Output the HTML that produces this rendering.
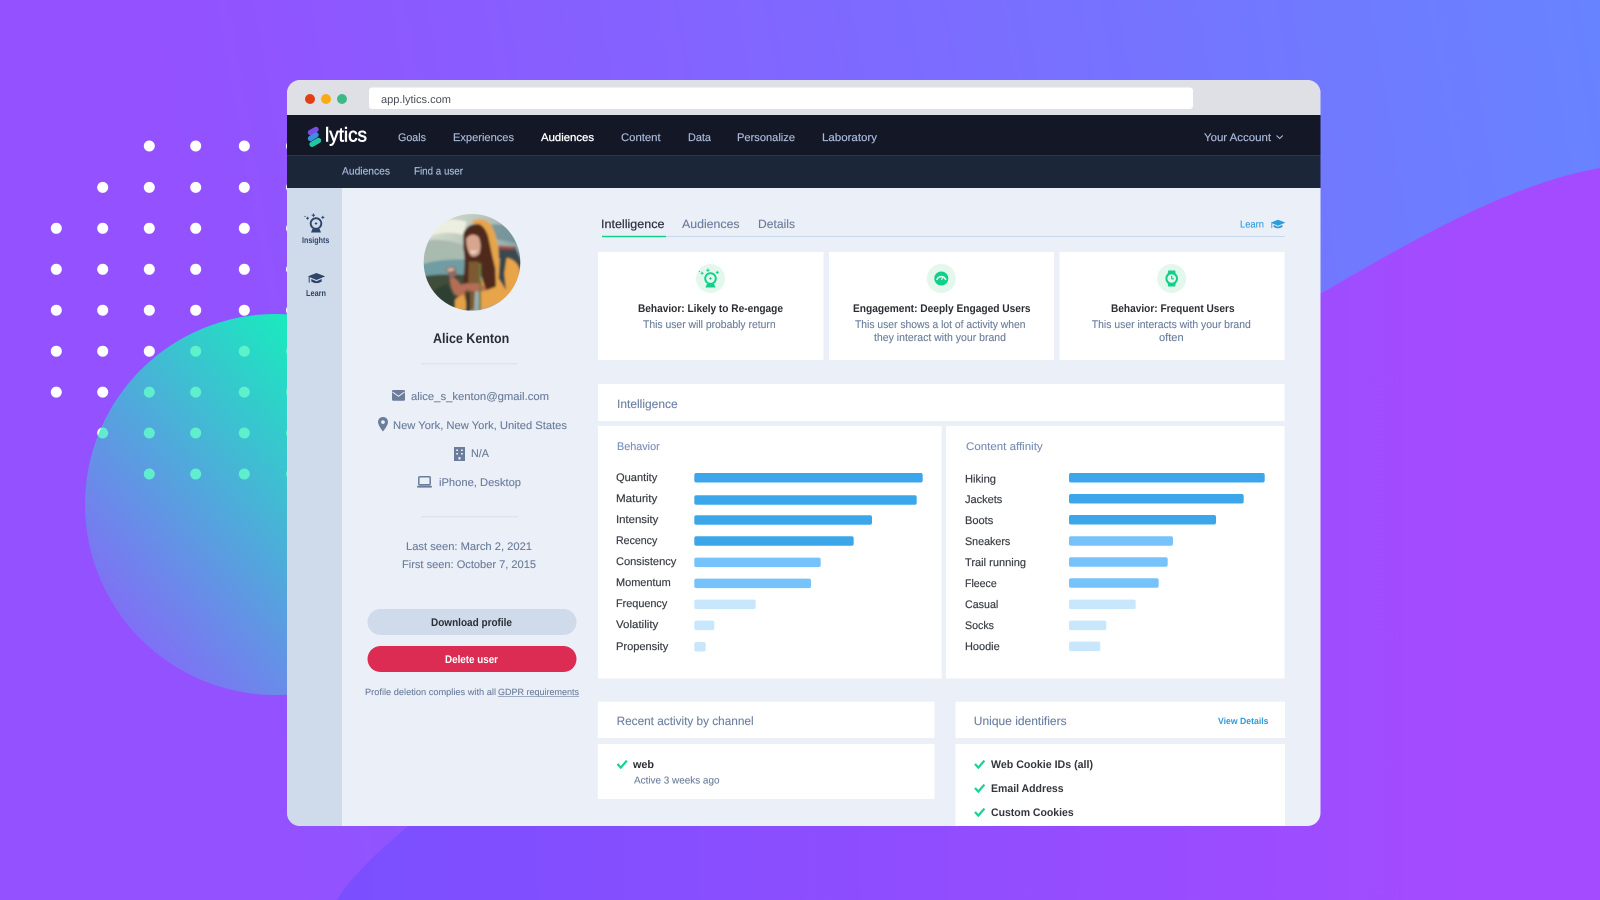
<!DOCTYPE html>
<html lang="en"><head><meta charset="utf-8"><title>Lytics</title>
<style>
html,body{margin:0;padding:0;width:1600px;height:900px;overflow:hidden;background:#9351ff}
svg{display:block;position:absolute;left:0;top:0}
text{font-family:"Liberation Sans",sans-serif;text-rendering:geometricPrecision}
.n{font-size:11px;fill:#a9b9d8;stroke:#a9b9d8;stroke-width:.18}
.d{font-size:11px;fill:#6b7d9b;stroke:#6b7d9b;stroke-width:.12}
.l{font-size:11px;fill:#3a3e46;stroke:#3a3e46;stroke-width:.2}
.b{font-size:11px;fill:#2a2d33;font-weight:700}
.h{font-size:12px;fill:#6d80a2;stroke:#6d80a2;stroke-width:.12}
.c{fill:#10cf8a}
</style></head><body>
<svg width="1600" height="900" viewBox="0 0 1600 900" xmlns="http://www.w3.org/2000/svg">
<defs>
<linearGradient id="bg" gradientUnits="userSpaceOnUse" x1="200" y1="300" x2="1600" y2="60"><stop offset="0" stop-color="#9351ff"/><stop offset="1" stop-color="#6883ff"/></linearGradient>
<linearGradient id="wave" gradientUnits="userSpaceOnUse" x1="337" y1="0" x2="1500" y2="0"><stop offset="0" stop-color="#7a4fff"/><stop offset="1" stop-color="#a54bff"/></linearGradient>
<linearGradient id="orb" gradientUnits="userSpaceOnUse" x1="320" y1="320" x2="60" y2="550"><stop offset="0" stop-color="#12f3ba"/><stop offset="1" stop-color="#8070f5"/></linearGradient>
<clipPath id="win"><rect x="287" y="80" width="1033.500" height="746" rx="13"/></clipPath>
<clipPath id="orbc"><circle cx="275.500" cy="504.500" r="190.500"/></clipPath>
<clipPath id="av"><circle cx="216" cy="172" r="145"/></clipPath>
<linearGradient id="sky" x1="0" y1="0" x2="1" y2="0.5"><stop offset="0" stop-color="#dfe5d2"/><stop offset=".5" stop-color="#b9c7bd"/><stop offset="1" stop-color="#7f9ca3"/></linearGradient>
<filter id="soft" x="-10%" y="-10%" width="120%" height="120%"><feGaussianBlur stdDeviation="3"/></filter>
<g id="dots" >
<circle cx="149.300" cy="146" r="5.500"/><circle cx="195.700" cy="146" r="5.500"/><circle cx="244.300" cy="146" r="5.500"/><circle cx="291.500" cy="146" r="5.500"/>
<circle cx="102.700" cy="187.400" r="5.500"/><circle cx="149.300" cy="187.400" r="5.500"/><circle cx="195.700" cy="187.400" r="5.500"/><circle cx="244.300" cy="187.400" r="5.500"/><circle cx="291.500" cy="187.400" r="5.500"/>
<circle cx="56.300" cy="228.300" r="5.500"/><circle cx="102.700" cy="228.300" r="5.500"/><circle cx="149.300" cy="228.300" r="5.500"/><circle cx="195.700" cy="228.300" r="5.500"/><circle cx="244.300" cy="228.300" r="5.500"/><circle cx="291.500" cy="228.300" r="5.500"/>
<circle cx="56.300" cy="269.300" r="5.500"/><circle cx="102.700" cy="269.300" r="5.500"/><circle cx="149.300" cy="269.300" r="5.500"/><circle cx="195.700" cy="269.300" r="5.500"/><circle cx="244.300" cy="269.300" r="5.500"/><circle cx="291.500" cy="269.300" r="5.500"/>
<circle cx="56.300" cy="310.200" r="5.500"/><circle cx="102.700" cy="310.200" r="5.500"/><circle cx="149.300" cy="310.200" r="5.500"/><circle cx="195.700" cy="310.200" r="5.500"/><circle cx="244.300" cy="310.200" r="5.500"/><circle cx="291.500" cy="310.200" r="5.500"/>
<circle cx="56.300" cy="351.200" r="5.500"/><circle cx="102.700" cy="351.200" r="5.500"/><circle cx="149.300" cy="351.200" r="5.500"/><circle cx="195.700" cy="351.200" r="5.500"/><circle cx="244.300" cy="351.200" r="5.500"/><circle cx="291.500" cy="351.200" r="5.500"/>
<circle cx="56.300" cy="392.100" r="5.500"/><circle cx="102.700" cy="392.100" r="5.500"/><circle cx="149.300" cy="392.100" r="5.500"/><circle cx="195.700" cy="392.100" r="5.500"/><circle cx="244.300" cy="392.100" r="5.500"/><circle cx="291.500" cy="392.100" r="5.500"/>
<circle cx="102.700" cy="433" r="5.500"/><circle cx="149.300" cy="433" r="5.500"/><circle cx="195.700" cy="433" r="5.500"/><circle cx="244.300" cy="433" r="5.500"/><circle cx="291.500" cy="433" r="5.500"/>
<circle cx="149.300" cy="474" r="5.500"/><circle cx="195.700" cy="474" r="5.500"/><circle cx="244.300" cy="474" r="5.500"/><circle cx="291.500" cy="474" r="5.500"/>
</g>
<g id="ball">
<circle cx="0" cy="-1.500" r="5.300" fill="none" stroke="currentColor" stroke-width="1.900"/>
<path d="M-5 7.500 L-3.600 4 H3.600 L5 7.500 Z" fill="currentColor"/>
<path d="M-1.200-1.500H1.200M0-2.700V-.3" stroke="currentColor" stroke-width="1"/>
<path d="M-4.300-9.800 H-.9 M-2.600-11.500 V-8.100 M5.300-7.600 H8.300 M6.800-9.100 V-6.100 M-9.800-6.800 H-7 M-8.400-8.200 V-5.400" stroke="currentColor" stroke-width="1" fill="none"/>
<circle cx="-11" cy="-8.500" r=".6" fill="currentColor"/>
</g>
<g id="cap">
<path d="M0-5 L8.700-1.600 L0 2 L-8.700-1.600 Z" fill="currentColor"/>
<path d="M-5.200 1 L0 3.200 L5.200 1 V3.600 Q0 6.600 -5.200 3.600 Z" fill="currentColor"/>
<path d="M-7.300-1 V4.600" stroke="currentColor" stroke-width="1" fill="none"/>
</g>
<path id="chk" d="M0 4 L3.300 7.600 L9.400 .6" fill="none" stroke="#1ccf93" stroke-width="2.200"/>
</defs>

<rect width="1600" height="900" fill="url(#bg)"/>
<path d="M337 900 C 352 875 380 850 408 826 C 640 560 1050 450 1320 294 C 1420 236 1510 184 1600 168 L1600 900 Z" fill="url(#wave)"/>
<use href="#dots" fill="#fff"/>
<circle cx="275.500" cy="504.500" r="190.500" fill="url(#orb)"/>
<g clip-path="url(#orbc)"><use href="#dots" fill="#62f5cc" opacity=".9"/></g>

<g clip-path="url(#win)">
<rect x="287" y="80" width="1033.500" height="746" fill="#ebeff7"/>
<rect x="287" y="80" width="1033.500" height="35" fill="#dfe0e5"/>
<circle cx="310" cy="99" r="5" fill="#e33d12"/><circle cx="326" cy="99" r="5" fill="#fbab12"/><circle cx="342" cy="99" r="5" fill="#3db985"/>
<rect x="369" y="87.500" width="824" height="21.500" rx="3" fill="#fff"/>
<text x="381" y="103" font-size="11" fill="#4a4d55" textLength="70" lengthAdjust="spacingAndGlyphs">app.lytics.com</text>

<rect x="287" y="115" width="1033.500" height="40" fill="#131726"/>
<rect x="287" y="155" width="1033.500" height="33" fill="#1b2638"/>
<rect x="287" y="155" width="1033.500" height="1" fill="#2e3648"/>
<path d="M310.500 132.500 L316 129.500" stroke="#7a4be8" stroke-width="5.400" stroke-linecap="round"/>
<path d="M310.500 138.500 L316 135" stroke="#3d8fe0" stroke-width="5.400" stroke-linecap="round"/>
<path d="M312 144.300 L318.500 140.500" stroke="#22c6a5" stroke-width="5.400" stroke-linecap="round"/>
<text x="325" y="141.500" font-size="20" fill="#fff" stroke="#fff" stroke-width=".55" textLength="42" lengthAdjust="spacingAndGlyphs">lytics</text>
<text class="n" x="398" y="141" textLength="28" lengthAdjust="spacingAndGlyphs">Goals</text>
<text class="n" x="453" y="141" textLength="61" lengthAdjust="spacingAndGlyphs">Experiences</text>
<text x="541" y="141" font-size="11" fill="#fff" stroke="#fff" stroke-width=".3" textLength="53" lengthAdjust="spacingAndGlyphs">Audiences</text>
<text class="n" x="621" y="141" textLength="39.600" lengthAdjust="spacingAndGlyphs">Content</text>
<text class="n" x="688" y="141" textLength="23" lengthAdjust="spacingAndGlyphs">Data</text>
<text class="n" x="737" y="141" textLength="58" lengthAdjust="spacingAndGlyphs">Personalize</text>
<text class="n" x="822" y="141" textLength="55" lengthAdjust="spacingAndGlyphs">Laboratory</text>
<text class="n" x="1204" y="141" textLength="67" lengthAdjust="spacingAndGlyphs">Your Account</text>
<path d="M1276.500 135.500 L1279.700 138.500 L1282.800 135.500" fill="none" stroke="#a9b9d8" stroke-width="1.100"/>
<text class="n" x="342" y="174.500" textLength="48" lengthAdjust="spacingAndGlyphs" style="font-size:10.500px">Audiences</text>
<text class="n" x="414" y="174.500" textLength="49" lengthAdjust="spacingAndGlyphs" style="font-size:10.500px">Find a user</text>

<rect x="287" y="188" width="55" height="640" fill="#cfdbeb"/>
<use href="#ball" x="316" y="225" color="#2f4468"/>
<text x="302" y="243" font-size="8.500" font-weight="700" fill="#2f4468" textLength="27.300" lengthAdjust="spacingAndGlyphs">Insights</text>
<use href="#cap" x="316.500" y="278" color="#2f4468"/>
<text x="306" y="296" font-size="8.500" font-weight="700" fill="#2f4468" textLength="20" lengthAdjust="spacingAndGlyphs">Learn</text>

<g transform="translate(400 205) scale(.33333)">
<g clip-path="url(#av)"><g filter="url(#soft)">
<rect x="60" y="20" width="310" height="310" fill="url(#sky)"/>
<path d="M60 70 Q130 30 200 50 L190 90 Q120 70 60 110Z" fill="#ecefdf"/>
<path d="M60 110 Q120 95 190 120 V160 L60 175Z" fill="#a9baaf"/>
<path d="M270 60 Q320 50 370 90 V120 Q310 105 270 100Z" fill="#6e8e96" opacity=".8"/>
<path d="M60 178 Q130 160 200 163 L200 250 H60Z" fill="#6f9ca3"/>
<path d="M60 215 Q120 205 200 210 V330 H60Z" fill="#3f4e3b"/>
<path d="M90 262 L140 235 L175 300 V330 H110Z" fill="#2f3f31"/>
<path d="M295 125 L345 125 L365 170 V290 L300 255Z" fill="#3a4950"/>
<path d="M295 122 L340 125 L345 134 L298 132Z" fill="#a8493c"/>
<path d="M296 160 Q340 150 358 190 Q368 240 340 272 Q290 300 245 315 L235 240 L262 200Z" fill="#e8a448"/>
<path d="M215 48 Q250 32 272 58 Q296 100 296 150 L292 195 L276 175 L264 92 Q240 60 215 52Z" fill="#e6a54c"/>
<path d="M190 85 Q205 52 240 58 Q262 72 268 110 Q276 150 286 190 L288 245 L258 256 L236 190 L206 236 L188 232 Q198 175 190 130Z" fill="#50291c"/>
<path d="M199 100 Q216 80 236 96 Q246 122 238 146 Q224 160 212 152 Q198 132 199 100Z" fill="#d8a68e"/>
<path d="M210 136 Q222 143 233 133 Q226 146 215 144Z" fill="#f5eee6"/>
<path d="M206 170 H236 L246 240 L225 250 L222 316 H175 L185 268 L205 235Z" fill="#7c5a32"/>
<path d="M300 150 Q325 140 318 170 L313 205 L318 255 L296 220Z" fill="#36464c"/>
<path d="M165 285 L190 262 L205 316 H165Z" fill="#e2a046"/>
<path d="M150 215 Q175 222 180 238 L232 234 Q262 244 258 256 Q225 266 200 252 L186 272 Q170 275 162 265 Q148 240 150 215Z" fill="#b56d56"/>
<path d="M135 190 L163 184 L172 208 L152 222Z" fill="#8c6a62"/>
<path d="M140 192 L160 188 L163 196 L146 201Z" fill="#d8b2a0"/>
<path d="M198 262 H210 V322 H198Z" fill="#35352f"/>
<path d="M237 175 H243 V316 H237Z" fill="#6e7a3e"/>
</g></g></g>

<text x="433" y="343" font-size="14" font-weight="700" fill="#2a2d33" textLength="76.300" lengthAdjust="spacingAndGlyphs">Alice Kenton</text>
<rect x="421" y="363" width="96" height="1.400" fill="#dde4ee"/>

<rect x="392" y="390" width="13" height="10.700" rx="1.300" fill="#6b7d9b"/><path d="M392.500 392 L398.500 396.300 L404.500 392" fill="none" stroke="#ebeff7" stroke-width="1"/>
<text class="d" x="411" y="400" textLength="138" lengthAdjust="spacingAndGlyphs">alice_s_kenton@gmail.com</text>
<path fill-rule="evenodd" d="M383 417 C379.500 417 378 419.700 378 422 C378 425.500 383 431.500 383 431.500 C383 431.500 388 425.500 388 422 C388 419.700 386.500 417 383 417 Z M383 420.200 A1.900 1.900 0 1 1 382.990 420.200 Z" fill="#6b7d9b"/>
<text class="d" x="393" y="429" textLength="174" lengthAdjust="spacingAndGlyphs">New York, New York, United States</text>
<path fill-rule="evenodd" d="M454 447 H465 V461 H454 Z M456.200 449.500 V451 H458 V449.500 Z M461 449.500 V451 H462.800 V449.500 Z M456.200 453 V454.500 H458 V453 Z M461 453 V454.500 H462.800 V453 Z M458.500 457 V459.500 H460.500 V457 Z" fill="#6b7d9b"/>
<text class="d" x="471" y="457" textLength="18" lengthAdjust="spacingAndGlyphs">N/A</text>
<rect x="418.800" y="476.700" width="11.400" height="8" rx="1" fill="none" stroke="#6b7d9b" stroke-width="1.500"/><rect x="417" y="485.800" width="15" height="1.800" rx=".8" fill="#6b7d9b"/>
<text class="d" x="439" y="486" textLength="82" lengthAdjust="spacingAndGlyphs">iPhone, Desktop</text>
<rect x="421" y="516" width="97" height="1.400" fill="#dde4ee"/>
<text class="d" x="406" y="550" textLength="126" lengthAdjust="spacingAndGlyphs">Last seen: March 2, 2021</text>
<text class="d" x="402" y="568" textLength="134" lengthAdjust="spacingAndGlyphs">First seen: October 7, 2015</text>
<rect x="367.500" y="609" width="209" height="26" rx="13" fill="#cfdbeb"/>
<text class="b" x="431" y="626" textLength="81" lengthAdjust="spacingAndGlyphs">Download profile</text>
<rect x="367.500" y="646" width="209" height="26" rx="13" fill="#dc2c53"/>
<text class="b" x="445" y="663" style="fill:#fff" textLength="53" lengthAdjust="spacingAndGlyphs">Delete user</text>
<text x="365" y="695" font-size="9" fill="#6b7d9b" stroke="#6b7d9b" stroke-width=".1" textLength="131" lengthAdjust="spacingAndGlyphs">Profile deletion complies with all</text>
<text x="498" y="695" font-size="9" fill="#6b7d9b" stroke="#6b7d9b" stroke-width=".1" textLength="81" lengthAdjust="spacingAndGlyphs">GDPR requirements</text>
<rect x="498" y="696" width="81" height=".8" fill="#8a9ab5"/>

<text x="601" y="228" font-size="12" fill="#2b3040" textLength="63.500" lengthAdjust="spacingAndGlyphs" stroke="#2b3040" stroke-width=".2">Intelligence</text>
<text class="d" x="682" y="228" style="font-size:12px" textLength="57.600" lengthAdjust="spacingAndGlyphs">Audiences</text>
<text class="d" x="758" y="228" style="font-size:12px" textLength="37" lengthAdjust="spacingAndGlyphs">Details</text>
<rect x="602" y="236" width="682.600" height="1" fill="#c8d8ec"/>
<rect x="602" y="235.800" width="64" height="1.400" fill="#10cf8a"/>
<text x="1240" y="227.500" font-size="10" fill="#2d9bdc" stroke="#2d9bdc" stroke-width=".1" textLength="24" lengthAdjust="spacingAndGlyphs">Learn</text>
<g transform="translate(1278 224) scale(.85)"><use href="#cap" color="#2d9bdc"/></g>

<rect x="598" y="252" width="225.500" height="108" fill="#fff"/>
<rect x="829" y="252" width="225" height="108" fill="#fff"/>
<rect x="1059.600" y="252" width="225" height="108" fill="#fff"/>
<circle cx="710.500" cy="278.500" r="14.500" fill="#e3f7ec"/>
<circle cx="941.300" cy="278.500" r="14.500" fill="#e3f7ec"/>
<circle cx="1171.700" cy="278.500" r="14.500" fill="#e3f7ec"/>
<use href="#ball" x="710.500" y="280" color="#10cf8a"/>
<circle class="c" cx="941.300" cy="278.500" r="7"/><path d="M936.800 280 A4.700 4.700 0 0 1 945.800 280" fill="none" stroke="#e3f7ec" stroke-width="1.800"/><path d="M941.300 280 L943.300 276.800" stroke="#e3f7ec" stroke-width="1.100"/>
<path class="c" d="M1168.200 270.500 H1175.200 L1175.800 274.500 H1167.600 Z M1167.600 282.500 H1175.800 L1175.200 286.500 H1168.200 Z"/>
<circle cx="1171.700" cy="278.500" r="5.300" fill="#e3f7ec" stroke="#10cf8a" stroke-width="2"/><path d="M1171.700 275.800 V278.800 H1174" fill="none" stroke="#10cf8a" stroke-width="1.200"/>
<text class="b" x="638" y="312" textLength="145" lengthAdjust="spacingAndGlyphs">Behavior: Likely to Re-engage</text>
<text class="b" x="853" y="312" textLength="177.600" lengthAdjust="spacingAndGlyphs">Engagement: Deeply Engaged Users</text>
<text class="b" x="1111" y="312" textLength="123.600" lengthAdjust="spacingAndGlyphs">Behavior: Frequent Users</text>
<text class="d" x="643" y="328" textLength="132.600" lengthAdjust="spacingAndGlyphs">This user will probably return</text>
<text class="d" x="855" y="328" textLength="170.500" lengthAdjust="spacingAndGlyphs">This user shows a lot of activity when</text>
<text class="d" x="874" y="341" textLength="132" lengthAdjust="spacingAndGlyphs">they interact with your brand</text>
<text class="d" x="1091.800" y="328" textLength="159" lengthAdjust="spacingAndGlyphs">This user interacts with your brand</text>
<text class="d" x="1159" y="341" textLength="24.600" lengthAdjust="spacingAndGlyphs">often</text>

<rect x="598" y="384" width="686.600" height="37" fill="#fff"/>
<text class="h" x="617" y="408" textLength="60.700" lengthAdjust="spacingAndGlyphs">Intelligence</text>
<rect x="598" y="426" width="343.700" height="252.500" fill="#fff"/>
<rect x="946" y="426" width="338.500" height="252.500" fill="#fff"/>
<text class="h" x="617" y="450" style="font-size:11px;fill:#7a8fb5;stroke:#7a8fb5" textLength="42.700" lengthAdjust="spacingAndGlyphs">Behavior</text>
<text class="h" x="966" y="450" style="font-size:11px;fill:#7a8fb5;stroke:#7a8fb5" textLength="76.700" lengthAdjust="spacingAndGlyphs">Content affinity</text>

<g fill="#3ba7ea">
<rect x="694.300" y="473" width="228.400" height="9.500" rx="2"/><rect x="694.300" y="495.300" width="222.400" height="9.500" rx="2"/><rect x="694.300" y="515.300" width="177.700" height="9.500" rx="2"/><rect x="694.300" y="536.300" width="159.400" height="9.500" rx="2"/>
<rect x="1069" y="473" width="195.700" height="9.500" rx="2"/><rect x="1069" y="494" width="174.700" height="9.500" rx="2"/><rect x="1069" y="515" width="147" height="9.500" rx="2"/>
</g>
<g fill="#76c3fb">
<rect x="694.300" y="557.600" width="126.400" height="9.500" rx="2"/><rect x="694.300" y="578.600" width="116.700" height="9.500" rx="2"/>
<rect x="1069" y="536.300" width="104" height="9.500" rx="2"/><rect x="1069" y="557.300" width="98.700" height="9.500" rx="2"/><rect x="1069" y="578.300" width="89.700" height="9.500" rx="2"/>
</g>
<g fill="#c8e7fd">
<rect x="694.300" y="599.600" width="61.400" height="9.500" rx="2"/><rect x="694.300" y="620.600" width="20" height="9.500" rx="2"/><rect x="694.300" y="642" width="11.400" height="9.500" rx="2"/>
<rect x="1069" y="599.600" width="66.700" height="9.500" rx="2"/><rect x="1069" y="620.600" width="37.300" height="9.500" rx="2"/><rect x="1069" y="641.600" width="31.300" height="9.500" rx="2"/>
</g>
<text class="l" x="616" y="481" textLength="41.300" lengthAdjust="spacingAndGlyphs">Quantity</text>
<text class="l" x="616" y="502" textLength="41.300" lengthAdjust="spacingAndGlyphs">Maturity</text>
<text class="l" x="616" y="523" textLength="42.300" lengthAdjust="spacingAndGlyphs">Intensity</text>
<text class="l" x="616" y="544" textLength="41.300" lengthAdjust="spacingAndGlyphs">Recency</text>
<text class="l" x="616" y="565" textLength="60.300" lengthAdjust="spacingAndGlyphs">Consistency</text>
<text class="l" x="616" y="586" textLength="54.700" lengthAdjust="spacingAndGlyphs">Momentum</text>
<text class="l" x="616" y="607" textLength="51.300" lengthAdjust="spacingAndGlyphs">Frequency</text>
<text class="l" x="616" y="628" textLength="42.300" lengthAdjust="spacingAndGlyphs">Volatility</text>
<text class="l" x="616" y="650" textLength="52.300" lengthAdjust="spacingAndGlyphs">Propensity</text>
<text class="l" x="965" y="482.500" textLength="31" lengthAdjust="spacingAndGlyphs">Hiking</text>
<text class="l" x="965" y="503" textLength="37.300" lengthAdjust="spacingAndGlyphs">Jackets</text>
<text class="l" x="965" y="524" textLength="28.300" lengthAdjust="spacingAndGlyphs">Boots</text>
<text class="l" x="965" y="545" textLength="45.300" lengthAdjust="spacingAndGlyphs">Sneakers</text>
<text class="l" x="965" y="566" textLength="61" lengthAdjust="spacingAndGlyphs">Trail running</text>
<text class="l" x="965" y="587" textLength="31.700" lengthAdjust="spacingAndGlyphs">Fleece</text>
<text class="l" x="965" y="608" textLength="33.300" lengthAdjust="spacingAndGlyphs">Casual</text>
<text class="l" x="965" y="629" textLength="29" lengthAdjust="spacingAndGlyphs">Socks</text>
<text class="l" x="965" y="650" textLength="34.700" lengthAdjust="spacingAndGlyphs">Hoodie</text>

<rect x="597.800" y="701.700" width="336.600" height="36.300" fill="#fff"/>
<rect x="955.500" y="701.700" width="329.500" height="36.300" fill="#fff"/>
<rect x="597.800" y="744" width="336.600" height="55" fill="#fff"/>
<rect x="955.500" y="744" width="329.500" height="90" fill="#fff"/>
<text class="h" x="616.600" y="725" textLength="137" lengthAdjust="spacingAndGlyphs">Recent activity by channel</text>
<text class="h" x="973.800" y="725" textLength="92.800" lengthAdjust="spacingAndGlyphs">Unique identifiers</text>
<text x="1218" y="724" font-size="9" font-weight="700" fill="#2d9bdc" textLength="50.500" lengthAdjust="spacingAndGlyphs">View Details</text>
<use href="#chk" x="617.500" y="760"/>
<text class="b" x="633" y="768" textLength="21" lengthAdjust="spacingAndGlyphs">web</text>
<text x="634" y="783.500" font-size="10" fill="#6b7d9b" stroke="#6b7d9b" stroke-width=".1" textLength="85.500" lengthAdjust="spacingAndGlyphs">Active 3 weeks ago</text>
<use href="#chk" x="975" y="760"/><use href="#chk" x="975" y="784"/><use href="#chk" x="975" y="808"/>
<text class="b" x="991" y="768" style="fill:#33363d" textLength="102" lengthAdjust="spacingAndGlyphs">Web Cookie IDs (all)</text>
<text class="b" x="991" y="792" style="fill:#33363d" textLength="72.600" lengthAdjust="spacingAndGlyphs">Email Address</text>
<text class="b" x="991" y="816" style="fill:#33363d" textLength="82.700" lengthAdjust="spacingAndGlyphs">Custom Cookies</text>
</g>
</svg>
</body></html>
